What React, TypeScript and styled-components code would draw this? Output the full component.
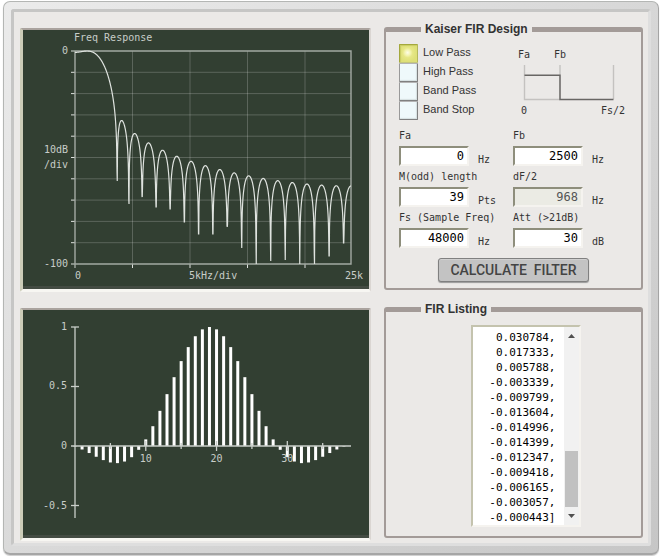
import React, { useLayoutEffect, useRef, useState } from "react";
import styled, { createGlobalStyle } from "styled-components";

const GlobalStyle = createGlobalStyle`
  *, *::before, *::after { box-sizing: border-box; }
  body {
    margin: 0;
    background: #fff;
    color: #333;
    font-family: "Liberation Sans", Arial, sans-serif;
    font-size: 11px;
  }
`;

const mono = `"DejaVu Sans Mono", Consolas, monospace`;

const Bezel = styled.main`
  margin: 1px 2px 1px 3px;
  padding: 7px;
  border: 1px solid #b4b6b4;
  border-right-color: #a4a4a4;
  border-bottom: 2px solid #a6a6a6;
  border-radius: 7px;
  background: linear-gradient(135deg, #ebebeb, #c6c6c6);
  box-shadow: 0 1px 1px #ccc;
`;

const Panel = styled.div`
  display: grid;
  grid-template-columns: 352fr 258fr;
  column-gap: 13px;
  padding: 0 5px 0 6px;
  border: 3px solid #c6c6c5;
  border-right-color: #dedede;
  border-bottom-color: #dedede;
  border-radius: 3px;
  background: #ebe9e7;
`;

const Screens = styled.div`
  display: flex;
  flex-direction: column;
  gap: 16px;
  padding: 16px 0 2px;
`;

const Controls = styled.div`
  display: flex;
  flex-direction: column;
  gap: 12px;
  padding-top: 10px;
`;

const Screen = styled.div`
  padding-bottom: 3px;
  border-style: solid;
  border-width: 2px 2px 3px 3px;
  border-color: #aaa39e #dad6d2 #f7f6f2 #ccccb8;
  border-radius: 2px;
  background: #434b42;
`;

const Plot = styled.svg`
  display: block;
  width: 100%;
  background: #323f32;
  font-family: ${mono};
  font-size: 10px;
  fill: #c8cdc8;
`;

const Group = styled.fieldset`
  min-width: 0;
  margin: 0;
  padding: 7px 13px 6px;
  border: 2px solid #a39b98;
  border-top-width: 5px;
  border-radius: 3px;
`;

const Title = styled.legend`
  margin-left: 22px;
  padding: 0 4px;
  line-height: 15px;
  font-size: 12px;
  font-weight: bold;
`;

const TwoColumns = styled.div`
  display: grid;
  grid-template-columns: 114px 1fr;
  row-gap: 4px;
`;

const Options = styled.div`
  display: flex;
  flex-direction: column;
`;

const Option = styled.label`
  display: flex;
  gap: 5px;
  height: 19px;
  line-height: 16px;
  white-space: nowrap;
`;

const Radio = styled.input`
  appearance: none;
  width: 19px;
  height: 19px;
  margin: 0;
  border: 1px solid #aaa;
  border-color: #b4b4b4 #808080 #808080 #999;
  border-radius: 1px;
  background: #eff9fb;
  box-shadow: inset -1px -1px 1px #d5dfe0;

  &:checked {
    border-color: #a4a83c #b4b85c #c4c77c #a4a83c;
    background: radial-gradient(circle at 45% 45%, #fdfde8 0, #f3f3ae 3px, #e6e786 5px, #dee078 9px);
    box-shadow: inset 1px 1px 1px #c9cc64;
  }
`;

const Sketch = styled.svg`
  display: block;
  width: 115px;
  font-family: ${mono};
  font-size: 10px;
  fill: #333;
`;

const Fields = styled(TwoColumns)`
  margin-top: 9px;
`;

const Field = styled.div`
  font-family: ${mono};
  font-size: 10px;
  line-height: 13px;
  white-space: nowrap;
`;

const FieldLabel = styled.label`
  display: block;
  margin-bottom: 4px;
`;

const Entry = styled.div`
  display: flex;
  align-items: flex-end;
  gap: 9px;
`;

const NumberBox = styled.input`
  width: 70px;
  height: 20px;
  margin: 0;
  padding: 0 3px;
  border: 2px solid;
  border-color: #8e8e7c #f5f3ef #f5f3ef #8e8e7c;
  background: #fff;
  color: #000;
  font-family: ${mono};
  font-size: 12px;
  text-align: right;

  &:disabled {
    background: #ebebe4;
    color: #545454;
  }
`;

const Calculate = styled.button`
  display: block;
  height: 24px;
  margin: 10px auto 0;
  padding: 0 11px;
  border: 1px solid #808080;
  border-radius: 3px;
  background: #c3c3c3;
  box-shadow: 0 1px 1px #999, inset 0 1px 0 #d0d0d0;
  color: #444;
  font-family: Roboto, sans-serif;
  font-size: 14px;
  font-weight: 500;
  line-height: 20px;
  white-space: pre;
`;

const ListingGroup = styled(Group)`
  padding: 8px 13px 9px;
`;

const Listing = styled.div`
  display: flex;
  width: 110px;
  height: 202px;
  margin-left: calc(50% - 43px);
  border: 2px solid;
  border-color: #c4c3ae #f5f3ef #f5f3ef #c4c3ae;
  background: #fff;
`;

const ListingText = styled.textarea`
  flex: 1;
  min-width: 0;
  margin: 0;
  padding: 0 8px 0 0;
  border: 0;
  outline: 0;
  resize: none;
  overflow: hidden;
  background: #fff;
  color: #000;
  font-family: ${mono};
  font-size: 11px;
  line-height: 15px;
  text-align: right;
`;

const ScrollBar = styled.div`
  display: flex;
  flex-direction: column;
  align-items: center;
  width: 15px;
  background: #f1f1f1;
`;

const ScrollTrack = styled.div`
  display: flex;
  flex: 1;
  flex-direction: column;
  justify-content: flex-end;
`;

const ScrollThumb = styled.div`
  width: 13px;
  height: 56px;
  background: #c1c1c1;
`;

const Arrow = styled.svg`
  display: block;
  width: 15px;
  height: 18px;
  fill: #505050;
`;

/* Kaiser-windowed low-pass design */
const LENGTH = 39;
const HALF = (LENGTH - 1) / 2;
const SAMPLE_RATE = 48000;
const CUTOFF = 2500;
const ATTENUATION = 30;

function bessel0(x: number) {
  let sum = 1;
  let term = 1;
  for (let k = 1; k < 30; k++) {
    term *= (x / (2 * k)) ** 2;
    sum += term;
  }
  return sum;
}

const alpha = 0.5842 * (ATTENUATION - 21) ** 0.4 + 0.07886 * (ATTENUATION - 21);

const taps = Array.from({ length: LENGTH }, (_, i) => {
  const n = i - HALF;
  const ideal =
    n === 0
      ? (2 * CUTOFF) / SAMPLE_RATE
      : Math.sin((2 * Math.PI * n * CUTOFF) / SAMPLE_RATE) / (Math.PI * n);
  return (ideal * bessel0(alpha * Math.sqrt(1 - (n / HALF) ** 2))) / bessel0(alpha);
});

const listing = `[${taps.map((t) => t.toFixed(6)).join(",\n")}]`;

/* Frequency plot geometry */
const LEFT = 52;
const RIGHT = 328;
const TOP = 21;
const BOTTOM = 234;
const NOTCH_DEPTHS = [151, 174, 167, 177, 179, 192, 204, 204, 197, 218, 234, 231, 230, 234, 234, 226, 213];

function gain(w: number) {
  return taps.reduce((sum, t, i) => sum + t * Math.cos(w * (i - HALF)), 0);
}

function responsePath() {
  const steps = 1104;
  const gains = Array.from({ length: steps + 1 }, (_, i) => gain((Math.PI * i) / steps));
  const peak = Math.max(...gains);
  const notches: number[] = [];
  gains.forEach((g, i) => {
    if (i > 0 && g * gains[i - 1] < 0) notches.push(i);
  });
  let nearest = 0;
  return gains
    .map((g, i) => {
      while (
        nearest < notches.length - 1 &&
        Math.abs(notches[nearest + 1] - i) < Math.abs(notches[nearest] - i)
      ) {
        nearest++;
      }
      const floor = NOTCH_DEPTHS[nearest] ?? BOTTOM;
      const x = LEFT + ((RIGHT - LEFT) * i) / steps;
      const db = 20 * Math.log10(Math.abs(g) / peak + 1e-9);
      let y = TOP - (db * (BOTTOM - TOP)) / 100;
      y = notches[nearest] === i ? floor : Math.min(y, floor);
      return `${i ? "L" : "M"}${x.toFixed(2)} ${y.toFixed(2)}`;
    })
    .join("");
}

const curve = responsePath();
const rows = Array.from({ length: 9 }, (_, i) => TOP + ((BOTTOM - TOP) * (i + 1)) / 10);
const columns = [5, 10, 15, 20].map((k) => LEFT + ((RIGHT - LEFT) * k) / 24);

function FrequencyPlot() {
  return (
    <Plot viewBox="0 0 346 256" role="img" aria-label="Frequency response">
      <g stroke="#fff" strokeOpacity="0.2">
        {rows.map((y) => (
          <line key={y} x1={LEFT} x2={RIGHT} y1={y} y2={y} />
        ))}
        {columns.map((x) => (
          <line key={x} x1={x} x2={x} y1={TOP} y2={BOTTOM} />
        ))}
      </g>
      <g stroke="#dde0dd">
        {rows.map((y) => (
          <line key={y} x1={LEFT - 4} x2={LEFT} y1={y} y2={y} />
        ))}
        {columns.map((x) => (
          <line key={x} x1={x} x2={x} y1={BOTTOM} y2={BOTTOM + 4} />
        ))}
      </g>
      <path
        d={`M${LEFT - 4} ${TOP}H${RIGHT}V${BOTTOM}H${LEFT - 4}M${LEFT} ${TOP}V${BOTTOM + 4}`}
        fill="none"
        stroke="#a3aaa3"
        strokeWidth="1.4"
      />
      <path d={curve} fill="none" stroke="#dfe3df" strokeWidth="1.2" />
      <text x="51" y="11">Freq Response</text>
      <text x="45" y="24" textAnchor="end">0</text>
      <text x="45" y="123" textAnchor="end">10dB</text>
      <text x="45" y="138" textAnchor="end">/div</text>
      <text x="45" y="237" textAnchor="end">-100</text>
      <text x="52" y="249">0</text>
      <text x="166" y="249">5kHz/div</text>
      <text x="340" y="249" textAnchor="end">25k</text>
    </Plot>
  );
}

const ZERO = 136;
const UNIT = 119;
const tapX = (n: number) => 52 + (n * 276) / LENGTH;

function ImpulsePlot() {
  const peak = taps[HALF];
  return (
    <Plot viewBox="0 0 346 225" role="img" aria-label="Impulse response">
      <g stroke="#fff" strokeWidth="3">
        {taps.map((t, n) => (
          <line key={n} x1={tapX(n)} x2={tapX(n)} y1={ZERO} y2={ZERO - (t / peak) * UNIT} />
        ))}
      </g>
      <g stroke="#c9cec9" strokeWidth="1.3">
        <path d="M52 17V208M48 136H328" />
        {[1, 0.5, -0.5].map((v) => (
          <line key={v} x1="48" x2="56" y1={ZERO - v * UNIT} y2={ZERO - v * UNIT} />
        ))}
        {[5, 10, 15, 20, 25, 30, 35].map((n) => {
          const size = n % 10 ? 3 : 5;
          return <line key={n} x1={tapX(n)} x2={tapX(n)} y1={ZERO - size} y2={ZERO + size} />;
        })}
      </g>
      <text x="44" y="20" textAnchor="end">1</text>
      <text x="44" y="79" textAnchor="end">0.5</text>
      <text x="44" y="139" textAnchor="end">0</text>
      <text x="44" y="199" textAnchor="end">-0.5</text>
      {[10, 20, 30].map((n) => (
        <text key={n} x={tapX(n)} y="152" textAnchor="middle">{n}</text>
      ))}
    </Plot>
  );
}

function PassBandSketch() {
  return (
    <Sketch viewBox="0 0 115 76" role="img" aria-label="Low pass band shape">
      <g fill="none" strokeWidth="1.4">
        <path d="M11.5 21V55.5H47M47 21V55M100.5 21V55" stroke="#c4c2c0" />
        <path d="M11.5 31.3H47V55.5H100.5" stroke="#686664" />
      </g>
      <text x="5" y="14">Fa</text>
      <text x="41" y="14">Fb</text>
      <text x="8" y="70">0</text>
      <text x="88" y="70">Fs/2</text>
    </Sketch>
  );
}

const bands = ["Low Pass", "High Pass", "Band Pass", "Band Stop"];

const fields = [
  { id: "fa", label: "Fa", value: "0", unit: "Hz" },
  { id: "fb", label: "Fb", value: "2500", unit: "Hz" },
  { id: "length", label: "M(odd) length", value: "39", unit: "Pts" },
  { id: "df", label: "dF/2", value: "968", unit: "Hz", disabled: true },
  { id: "fs", label: "Fs (Sample Freq)", value: "48000", unit: "Hz" },
  { id: "att", label: "Att (>21dB)", value: "30", unit: "dB" },
];

export default function App() {
  const [band, setBand] = useState(bands[0]);
  const listingRef = useRef<HTMLTextAreaElement>(null);

  useLayoutEffect(() => {
    const box = listingRef.current;
    if (box) box.scrollTop = box.scrollHeight;
  }, []);

  return (
    <>
      <GlobalStyle />
      <Bezel>
        <Panel>
          <Screens>
            <Screen>
              <FrequencyPlot />
            </Screen>
            <Screen>
              <ImpulsePlot />
            </Screen>
          </Screens>
          <Controls>
            <Group>
              <Title>Kaiser FIR Design</Title>
              <TwoColumns>
                <Options>
                  {bands.map((name) => (
                    <Option key={name}>
                      <Radio
                        type="radio"
                        name="band"
                        checked={band === name}
                        onChange={() => setBand(name)}
                      />
                      {name}
                    </Option>
                  ))}
                </Options>
                <PassBandSketch />
              </TwoColumns>
              <Fields>
                {fields.map((f) => (
                  <Field key={f.id}>
                    <FieldLabel htmlFor={f.id}>{f.label}</FieldLabel>
                    <Entry>
                      <NumberBox id={f.id} type="text" defaultValue={f.value} disabled={f.disabled} />
                      <span>{f.unit}</span>
                    </Entry>
                  </Field>
                ))}
              </Fields>
              <Calculate type="button">{"CALCULATE  FILTER"}</Calculate>
            </Group>
            <ListingGroup>
              <Title>FIR Listing</Title>
              <Listing>
                <ListingText ref={listingRef} readOnly aria-label="FIR Listing" value={listing} />
                <ScrollBar aria-hidden="true">
                  <Arrow viewBox="0 0 15 18">
                    <path d="M4 11L7.5 7L11 11Z" />
                  </Arrow>
                  <ScrollTrack>
                    <ScrollThumb />
                  </ScrollTrack>
                  <Arrow viewBox="0 0 15 18">
                    <path d="M4 7L7.5 11L11 7Z" />
                  </Arrow>
                </ScrollBar>
              </Listing>
            </ListingGroup>
          </Controls>
        </Panel>
      </Bezel>
    </>
  );
}
